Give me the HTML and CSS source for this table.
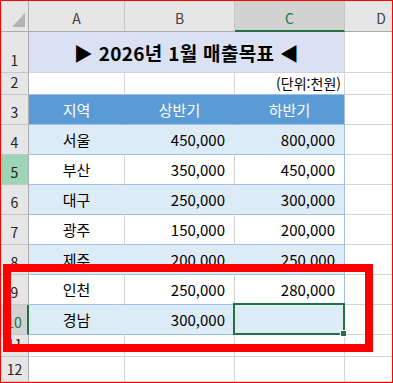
FILE: index.html
```html
<!DOCTYPE html>
<html lang="ko">
<head>
<meta charset="utf-8">
<title>2026년 1월 매출목표</title>
<link rel="stylesheet" href="styles.css">
</head>
<body>
<div class="frame">
  <div class="sheet">
    <div class="corner"><svg width="27" height="30" viewBox="0 0 27 30"><polygon points="24,12 24,26 11,26" fill="#b3b3b3"/></svg></div>
    <div class="ch">A</div>
    <div class="ch">B</div>
    <div class="ch ch-active">C</div>
    <div class="ch ch-d">D</div>

    <div class="rh">1</div>
    <div class="title">▶ 2026년 1월 매출목표 ◀</div>
    <div class="c"></div>

    <div class="rh">2</div>
    <div class="c tb"></div>
    <div class="c tb"></div>
    <div class="c tb unit">(단위:천원)</div>
    <div class="c"></div>

    <div class="rh">3</div>
    <div class="c hd">지역</div>
    <div class="c hd">상반기</div>
    <div class="c hd last">하반기</div>
    <div class="c"></div>

    <div class="rh">4</div>
    <div class="c band ctr">서울</div>
    <div class="c band num">450,000</div>
    <div class="c band num last">800,000</div>
    <div class="c"></div>

    <div class="rh rh-sel">5</div>
    <div class="c plain ctr">부산</div>
    <div class="c plain num">350,000</div>
    <div class="c plain num last">450,000</div>
    <div class="c"></div>

    <div class="rh">6</div>
    <div class="c band ctr">대구</div>
    <div class="c band num">250,000</div>
    <div class="c band num last">300,000</div>
    <div class="c"></div>

    <div class="rh">7</div>
    <div class="c plain ctr">광주</div>
    <div class="c plain num">150,000</div>
    <div class="c plain num last">200,000</div>
    <div class="c"></div>

    <div class="rh">8</div>
    <div class="c band ctr">제주</div>
    <div class="c band num">200,000</div>
    <div class="c band num last">250,000</div>
    <div class="c"></div>

    <div class="rh">9</div>
    <div class="c plain ctr">인천</div>
    <div class="c plain num">250,000</div>
    <div class="c plain num last">280,000</div>
    <div class="c"></div>

    <div class="rh rh-active">10</div>
    <div class="c band ctr">경남</div>
    <div class="c band num">300,000</div>
    <div class="c band num last active"></div>
    <div class="c"></div>

    <div class="rh">11</div>
    <div class="c"></div>
    <div class="c"></div>
    <div class="c"></div>
    <div class="c"></div>

    <div class="rh">12</div>
    <div class="c"></div>
    <div class="c"></div>
    <div class="c"></div>
    <div class="c"></div>
  </div>
  <div class="mark"></div>
</div>
</body>
</html>
```
FILE: styles.css
```css
* { box-sizing: border-box; }
html, body { margin: 0; padding: 0; background: #fff; }
body { font-family: "Noto Sans CJK KR", "Noto Sans", sans-serif; color: #000; }

.frame {
  position: relative;
  width: 393px;
  height: 383px;
  border: 1px solid #ff0000;
  overflow: hidden;
}

.sheet {
  display: grid;
  grid-template-columns: 28px 96px 110px 110px 72px;
  grid-template-rows: 31px 41px 22px repeat(8, 30px) 22px 25px;
}

.corner {
  background: #e6e6e6;
  border-right: 1px solid #ababab;
  border-bottom: 1px solid #ababab;
}
.corner svg { display: block; }

.ch {
  background: #e6e6e6;
  border-right: 1px solid #c6c6c6;
  border-bottom: 1px solid #ababab;
  display: flex;
  align-items: flex-end;
  justify-content: center;
  padding-bottom: 5px;
  font-size: 14px;
  line-height: 16px;
  color: #444;
}
.ch-active {
  background: #d2d2d2;
  color: #217346;
  border-bottom: 2px solid #217346;
  padding-bottom: 4px;
}
.ch-d { border-right: none; }

.rh {
  background: #e6e6e6;
  border-right: 1px solid #ababab;
  border-bottom: 1px solid #c6c6c6;
  display: flex;
  align-items: flex-end;
  justify-content: center;
  padding-bottom: 4px;
  font-size: 14px;
  line-height: 16px;
  color: #222;
}
.rh-sel { background: #9fd5b7; }
.rh-active {
  background: #d2d2d2;
  color: #217346;
  border-right: 2px solid #217346;
}

.c {
  border-right: 1px solid #d4d4d4;
  border-bottom: 1px solid #d4d4d4;
  display: flex;
  align-items: flex-end;
  padding-bottom: 4px;
  font-size: 15px;
  line-height: 20px;
  white-space: nowrap;
}

.title {
  grid-column: 2 / 5;
  background: #d9e1f2;
  border-right: 1px solid #d4d4d4;
  border-bottom: 1px solid #d4d4d4;
  display: flex;
  align-items: flex-end;
  justify-content: center;
  padding-bottom: 8px;
  font-size: 19px;
  line-height: 23px;
  font-weight: bold;
  letter-spacing: 0.3px;
}

.tb { border-bottom-color: #9bc2e6; }
.unit {
  justify-content: flex-end;
  padding-right: 3px;
  padding-bottom: 2px;
  font-size: 14px;
  line-height: 17px;
}

.hd {
  background: #5b9bd5;
  color: #fff;
  justify-content: center;
  border-right-color: #5b9bd5;
  border-bottom-color: #9bc2e6;
}
.band {
  background: #ddebf7;
  border-right-color: #ddebf7;
  border-bottom-color: #9bc2e6;
}
.plain { border-bottom-color: #9bc2e6; }
.last { border-right-color: #9bc2e6; }

.ctr { justify-content: center; }
.num { justify-content: flex-end; padding-right: 9px; }

.active { position: relative; }
.active::after {
  content: "";
  position: absolute;
  left: -2px;
  top: -2px;
  right: -1px;
  bottom: -1px;
  border: 2px solid #217346;
}
.active::before {
  content: "";
  position: absolute;
  right: -3px;
  bottom: -3px;
  width: 5px;
  height: 5px;
  background: #217346;
  border: 1px solid #fff;
  z-index: 2;
  box-sizing: content-box;
}

.mark {
  position: absolute;
  left: 2px;
  top: 263px;
  width: 370px;
  height: 88px;
  border: 8px solid #ff0000;
}
```
